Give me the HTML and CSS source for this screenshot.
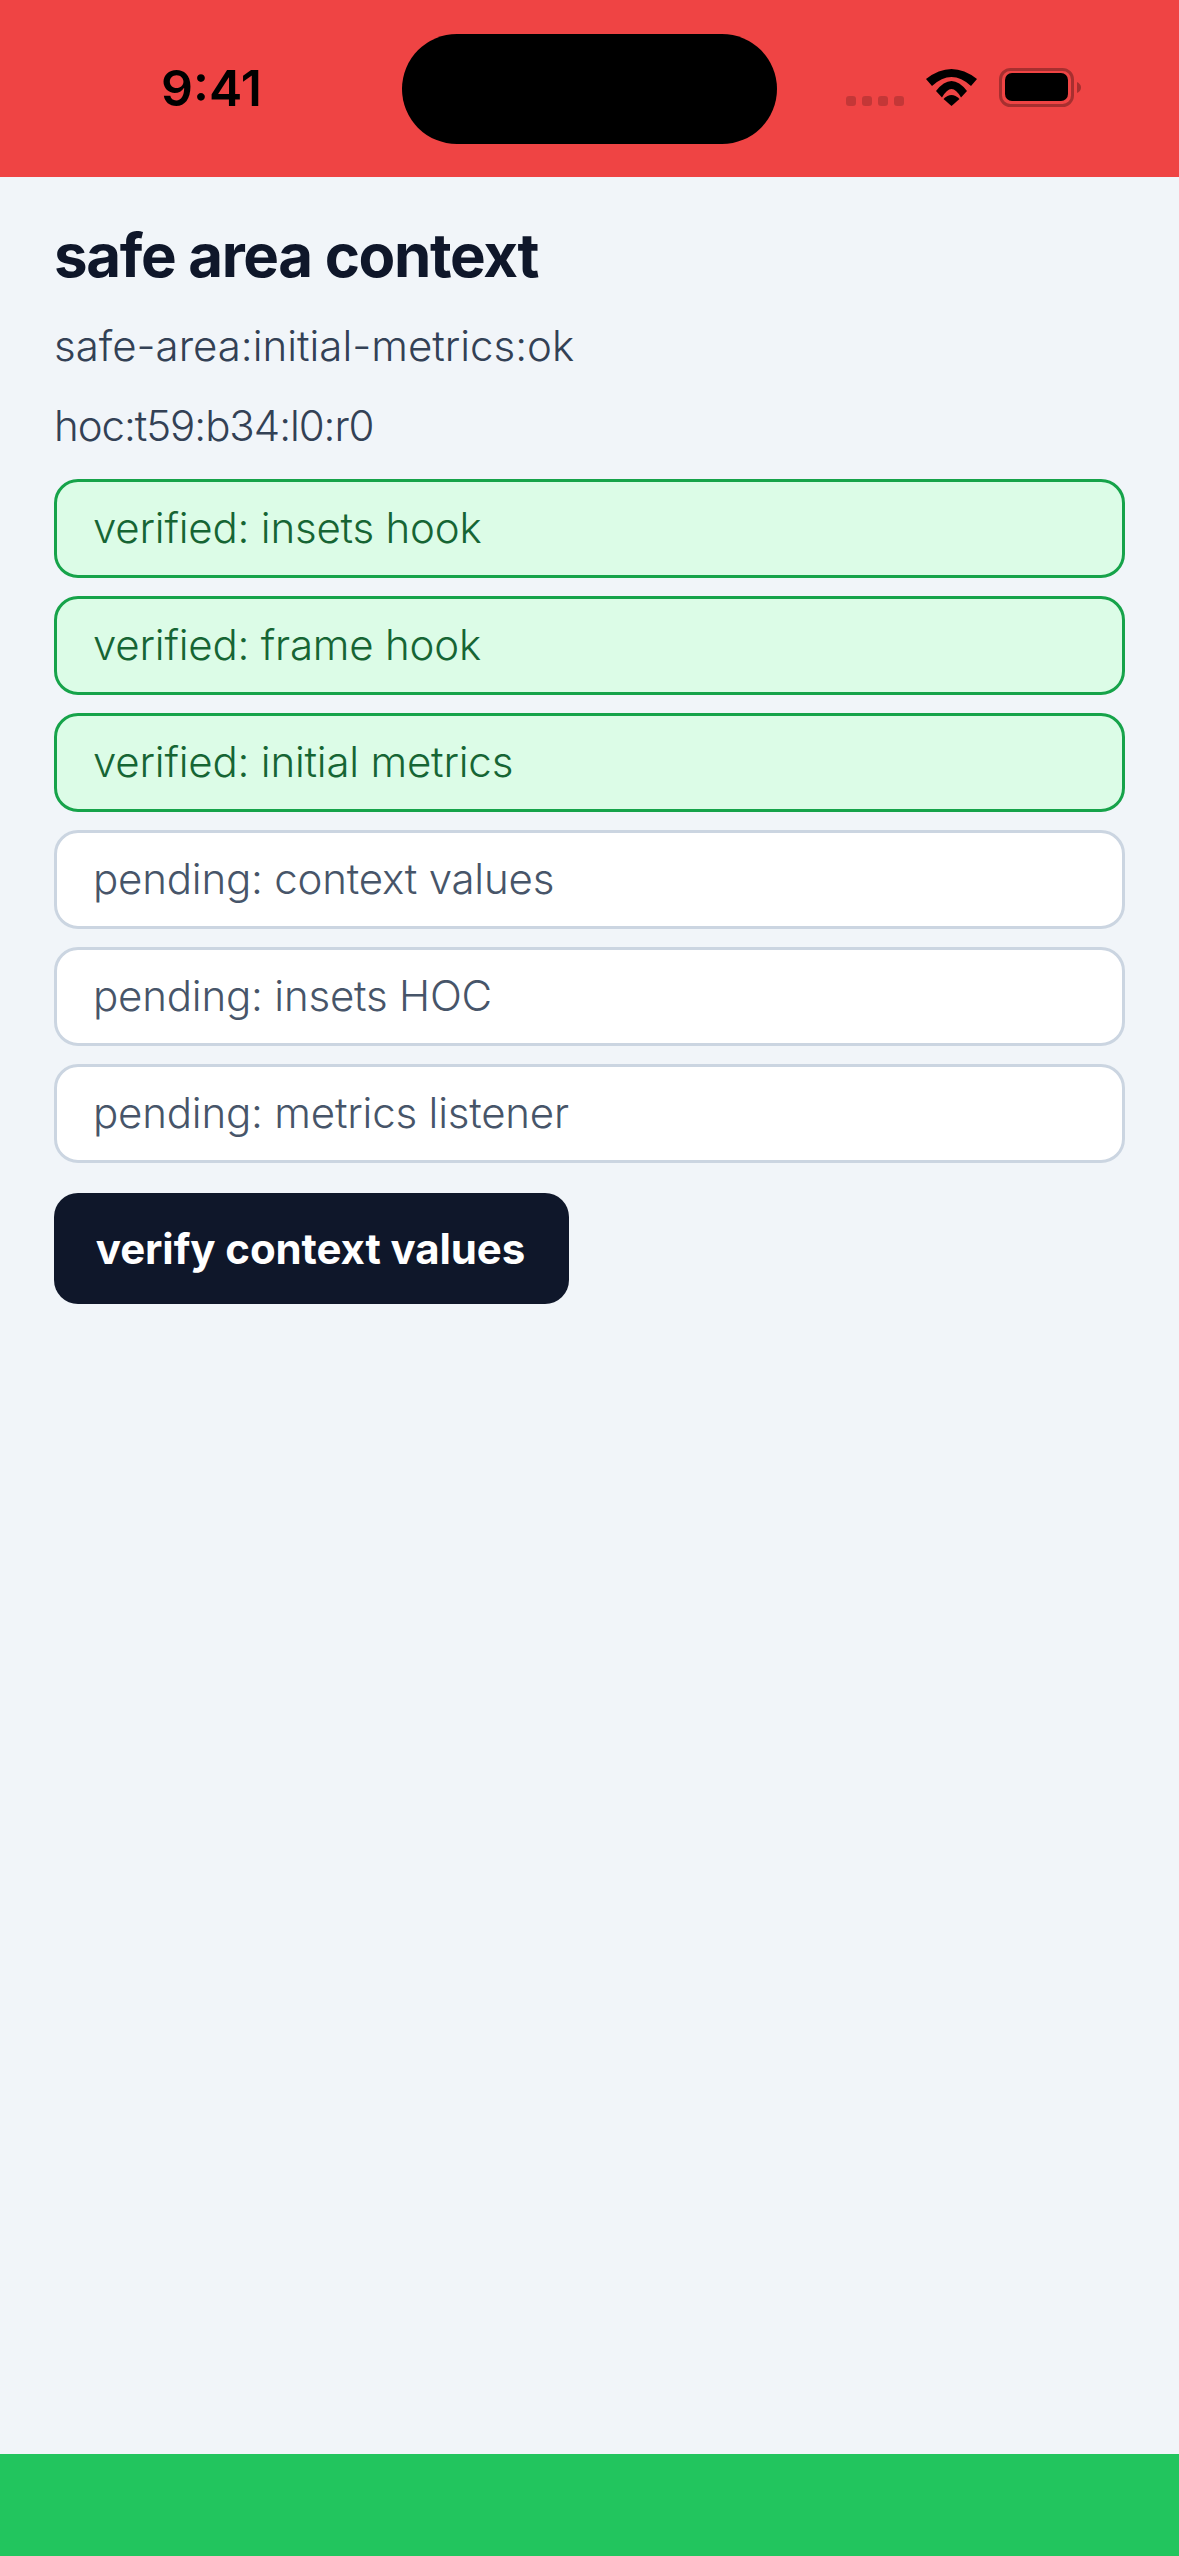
FILE: index.html
```html
<!DOCTYPE html>
<html lang="en">

<head>
    <meta charset="UTF-8">
    <meta name="viewport" content="width=device-width, initial-scale=1.0">
    <title>safe area context</title>
    <link rel="stylesheet" href="styles.css">
</head>

<body>
    <header class="status-bar">
        <span class="time">9:41</span>
        <div class="island"></div>
        <svg class="indicators" width="235" height="39" viewBox="0 0 235 39">
            <g fill="#000" fill-opacity="0.18">
                <rect x="0" y="28" width="10" height="10" rx="3" />
                <rect x="16" y="28" width="10" height="10" rx="3" />
                <rect x="32" y="28" width="10" height="10" rx="3" />
                <rect x="48" y="28" width="10" height="10" rx="3" />
            </g>
            <path d="M80 11Q105.5 -9 131 11L125 18Q105.5 0 86 18Z" />
            <path d="M90 23Q105.5 3 121 23L115 29.500Q105.5 12.500 96 29.500Z" />
            <path d="M97.500 31Q105.5 23 113.500 31L105.500 38Z" />
            <rect x="154.500" y="1.500" width="72" height="36" rx="10" fill="none" stroke="#000" stroke-opacity="0.3" stroke-width="3" />
            <rect x="159" y="5" width="63" height="28" rx="7" />
            <path d="M231 14Q235 16 235 19.500Q235 23 231 25Z" fill-opacity="0.3" />
        </svg>
    </header>

    <main class="content">
        <h1 class="title">safe area context</h1>
        <p class="line line-first">safe-area:initial-metrics:ok</p>
        <p class="line line-second">hoc:t59:b34:l0:r0</p>

        <div class="checks">
            <div class="check verified">verified: insets hook</div>
            <div class="check verified">verified: frame hook</div>
            <div class="check verified">verified: initial metrics</div>
            <div class="check pending">pending: context values</div>
            <div class="check pending">pending: insets HOC</div>
            <div class="check pending">pending: metrics listener</div>
        </div>

        <button class="verify-button">verify context values</button>
    </main>

    <footer class="bottom-bar"></footer>
</body>

</html>
```

FILE: styles.css
```css
* {
    box-sizing: border-box;
}

body {
    font-family: Inter, "Liberation Sans", sans-serif;
    background-color: #f1f5f9;
    display: flex;
    flex-direction: column;
    height: 2556px;
    margin: 0;
}

.status-bar {
    height: 177px;
    flex-shrink: 0;
    background-color: #ef4444;
    display: flex;
    align-items: flex-start;
    padding: 34px 0 0 161px;
}

.time {
    width: 241px;
    margin-top: 24px;
    font-size: 50px;
    line-height: 60px;
    font-weight: 600;
    color: #000;
}

.island {
    width: 375px;
    height: 110px;
    border-radius: 55px;
    background-color: #000;
}

.indicators {
    margin: 34px 0 0 69px;
}

.content {
    flex: 1;
    padding: 0 54px;
}

.title {
    margin: 51px 0 0;
    font-size: 60px;
    line-height: 54px;
    font-weight: 700;
    letter-spacing: -1.35px;
    color: #0f172a;
}

.line {
    margin: 0;
    font-size: 42px;
    font-weight: 300;
    line-height: 50px;
    color: #334155;
}

.line-first {
    margin-top: 39px;
}

.line-second {
    margin-top: 30px;
    letter-spacing: -1.05px;
}

.checks {
    display: flex;
    flex-direction: column;
    gap: 18px;
    margin-top: 28px;
}

.check {
    height: 99px;
    padding: 0 36px 2px;
    display: flex;
    align-items: center;
    border: 3px solid;
    border-radius: 24px;
    font-size: 42px;
    font-weight: 300;
    letter-spacing: -0.2px;
}

.verified {
    background-color: #dcfce7;
    border-color: #16a34a;
    color: #166534;
}

.pending {
    background-color: #fff;
    border-color: #cbd5e1;
    color: #475569;
}

.verify-button {
    display: block;
    width: 515px;
    height: 111px;
    margin-top: 30px;
    padding: 0 2px 0 0;
    background-color: #0f172a;
    color: #fff;
    border: none;
    border-radius: 24px;
    font-family: inherit;
    font-size: 42px;
    font-weight: 700;
    letter-spacing: -0.1px;
}

.bottom-bar {
    height: 102px;
    flex-shrink: 0;
    background-color: #22c55e;
}
```
